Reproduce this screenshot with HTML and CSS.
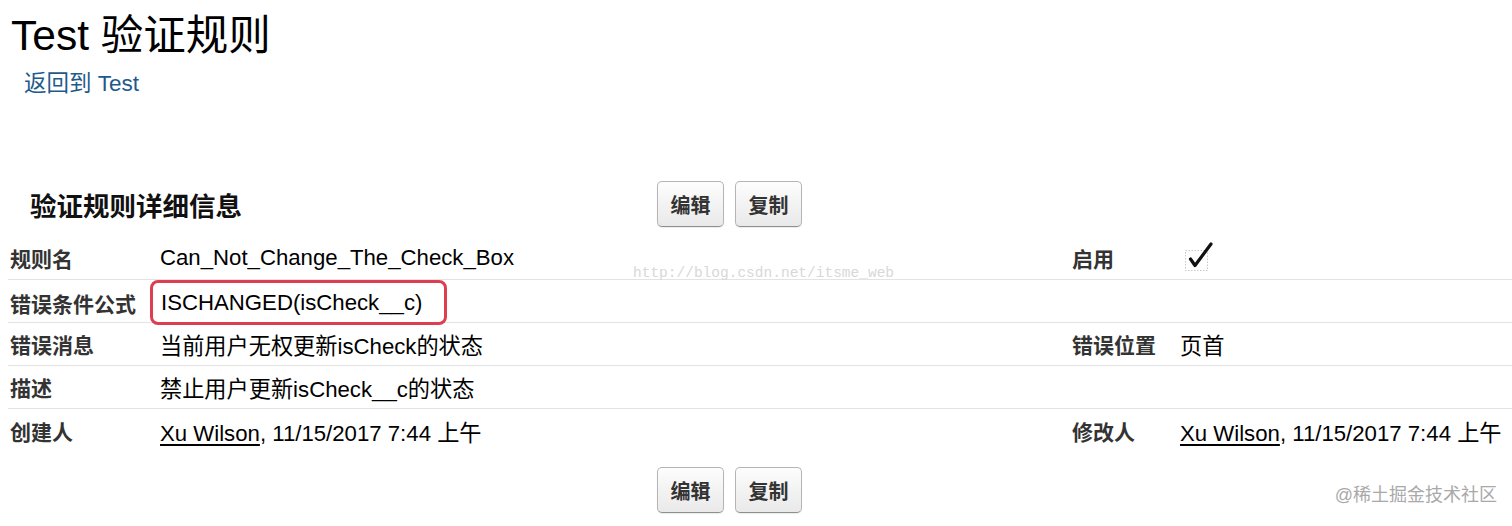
FILE: index.html
```html
<!DOCTYPE html>
<html lang="zh-CN">
<head>
<meta charset="utf-8">
<title>Test 验证规则</title>
<link rel="stylesheet" href="styles.css">
</head>
<body>
<div class="page">
  <h1 class="title">Test 验证规则</h1>
  <div class="back-row"><a class="back" href="#">返回到 Test</a></div>

  <div class="block-header">
    <h2 class="block-title">验证规则详细信息</h2>
    <div class="buttons">
      <button class="btn">编辑</button>
      <button class="btn">复制</button>
    </div>
  </div>

  <div class="detail">
    <div class="row">
      <div class="label">规则名</div>
      <div class="value">Can_Not_Change_The_Check_Box</div>
      <div class="label">启用</div>
      <div class="value">
        <span class="checkbox">
          <svg width="30" height="32" viewBox="0 0 30 32">
            <rect x="2.5" y="10.5" width="22" height="20" fill="none" stroke="#c8c8c8" stroke-width="1" stroke-dasharray="1.5 1.5"/>
            <path d="M7.5 19 L12 25.5 L28 4" fill="none" stroke="#111" stroke-width="3.2" stroke-linecap="round" stroke-linejoin="round"/>
          </svg>
        </span>
      </div>
      <span class="watermark">http://blog.csdn.net/itsme_web</span>
    </div>
    <div class="row">
      <div class="label">错误条件公式</div>
      <div class="value"><span class="highlight">ISCHANGED(isCheck__c)</span></div>
      <div class="label"></div>
      <div class="value"></div>
    </div>
    <div class="row">
      <div class="label">错误消息</div>
      <div class="value">当前用户无权更新isCheck的状态</div>
      <div class="label">错误位置</div>
      <div class="value">页首</div>
    </div>
    <div class="row">
      <div class="label">描述</div>
      <div class="value">禁止用户更新isCheck__c的状态</div>
      <div class="label"></div>
      <div class="value"></div>
    </div>
    <div class="row last">
      <div class="label">创建人</div>
      <div class="value"><a class="user" href="#">Xu Wilson</a>, 11/15/2017 7:44 上午</div>
      <div class="label">修改人</div>
      <div class="value"><a class="user" href="#">Xu Wilson</a>, 11/15/2017 7:44 上午</div>
    </div>
  </div>

  <div class="block-footer">
    <div class="buttons">
      <button class="btn">编辑</button>
      <button class="btn">复制</button>
    </div>
  </div>

  <div class="credit">@稀土掘金技术社区</div>
</div>
</body>
</html>
```

FILE: styles.css
```css
* { box-sizing: border-box; }
html, body {
  margin: 0;
  padding: 0;
  background: #ffffff;
}
body {
  font-family: "Liberation Sans", "Noto Sans CJK SC", Arial, sans-serif;
  color: #000;
  width: 1512px;
  height: 526px;
  overflow: hidden;
}
.page {
  position: relative;
  height: 526px;
}
.title {
  margin: 0;
  padding: 12px 0 0 11px;
  font-size: 42.5px;
  font-weight: normal;
  line-height: 48px;
  color: #000;
}
.back-row {
  padding: 10px 0 0 24px;
  line-height: 28px;
}
.back {
  font-size: 22.5px;
  color: #1f5a8c;
  text-decoration: none;
}
.block-header {
  display: flex;
  align-items: center;
  margin-top: 80px;
  height: 48px;
}
.block-title {
  margin: 0;
  width: 657px;
  padding-left: 30px;
  font-size: 26.5px;
  font-weight: bold;
  color: #111;
}
.buttons {
  display: flex;
  gap: 11px;
}
.btn {
  width: 67px;
  height: 46px;
  padding: 0;
  font-family: "Liberation Sans", "Noto Sans CJK SC", Arial, sans-serif;
  font-size: 20px;
  font-weight: bold;
  color: #333;
  background: linear-gradient(#fdfdfd, #e9e9e9);
  border: 1px solid #b5b5b5;
  border-bottom-color: #8f8f8f;
  border-radius: 5px;
  box-shadow: 0 1px 1px rgba(0,0,0,0.08);
}
.detail {
  margin-top: 9px;
  padding-left: 8px;
}
.row {
  position: relative;
  display: grid;
  grid-template-columns: 152px 910px 110px 1fr;
  align-items: center;
  height: 43px;
  border-bottom: 1px solid #e3e3e3;
}
.row.last {
  border-bottom: none;
}
.label {
  padding-left: 2px;
  font-size: 21px;
  font-weight: bold;
  color: #333;
  white-space: nowrap;
}
.value {
  font-size: 22.2px;
  color: #000;
  white-space: nowrap;
}
.user {
  color: #000;
  text-decoration: underline;
  text-underline-offset: 3px;
}
.highlight {
  display: inline-block;
  margin-left: -10px;
  padding: 0 22px 0 8px;
  line-height: 39px;
  border: 3px solid #dd3e50;
  border-radius: 8px;
}
.checkbox {
  display: inline-block;
  width: 30px;
  height: 32px;
  margin-left: 3px;
  margin-top: -6px;
  vertical-align: middle;
}
.checkbox svg { display: block; }
.watermark {
  position: absolute;
  left: 625px;
  top: 28px;
  font-family: "Liberation Mono", "DejaVu Sans Mono", monospace;
  font-size: 14.5px;
  color: #d8d8d8;
}
.block-footer {
  display: flex;
  padding-left: 657px;
  margin-top: 15px;
}
.credit {
  position: absolute;
  right: 15px;
  bottom: 20px;
  font-size: 18px;
  color: #a9a9a9;
}
```
